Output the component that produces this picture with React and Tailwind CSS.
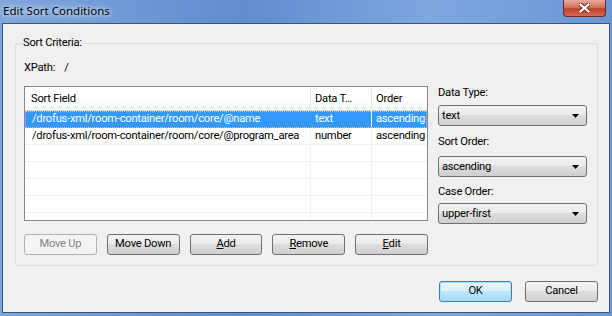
import React from 'react'

const font = { fontFamily: 'Roboto, "Noto Sans", sans-serif' }

function Btn({ children, disabled, primary, className = '' }) {
    let tone = 'border-[#707070] text-black bg-[linear-gradient(#f2f2f2_0%,#ebebeb_49%,#dddddd_50%,#cfcfcf_100%)]'
    if (disabled) tone = 'border-[#adb2b5] text-[#838383] bg-[#f4f4f4]'
    if (primary) tone = 'border-[#3c7fb1] text-black bg-[linear-gradient(#eaf6fd_0%,#d9f0fc_49%,#bee6fd_50%,#a7d9f5_100%)] shadow-[inset_0_0_0_1px_#a7e1fb]'
    return (
        <div className={`h-[21px] w-[73px] rounded-[3px] border flex items-center justify-center text-[11.2px] ${tone} ${className}`}>
            {children}
        </div>
    )
}

function Select({ value }) {
    return (
        <div className="h-[21px] w-[149px] rounded-[3px] border border-[#707070] bg-[linear-gradient(#f2f2f2_0%,#ebebeb_49%,#dddddd_50%,#cfcfcf_100%)] flex items-center justify-between pl-[3px] pr-[7px] text-[11.2px]">
            <span>{value}</span>
            <svg width="7" height="4" viewBox="0 0 7 4"><path d="M0 0h7L3.5 4z" fill="#000" /></svg>
        </div>
    )
}

export default function App() {
    const rows = [
        { field: '/drofus-xml/room-container/room/core/@name', type: 'text', order: 'ascending', selected: true },
        { field: '/drofus-xml/room-container/room/core/@program_area', type: 'number', order: 'ascending' },
        {}, {}, {}, {}, {}
    ]

    return (
        <div className="w-[612px] h-[316px] overflow-hidden flex flex-col tracking-[-0.25px] bg-[linear-gradient(90deg,#7ea5dc,#5f8dd0_40%,#7ea7de_70%,#6a97d6)]" style={font}>
            {/* Title bar */}
            <div className="h-[23px] flex items-start justify-between relative">
                <div className="pl-[3px] pt-[2px] text-[11.5px] tracking-normal text-black [text-shadow:0_0_8px_#e8f1fb,0_0_4px_#e8f1fb]" style={{ fontFamily: '"Noto Sans", sans-serif' }}>Edit Sort Conditions</div>
                <div className="mr-[6px] w-[43px] h-[17px] rounded-b-[4px] border border-t-0 border-[#6b2a24] bg-[linear-gradient(#e9a99b_0%,#d47563_45%,#c2412c_55%,#d16b4f_100%)] flex items-center justify-center">
                    <svg width="11" height="10" viewBox="0 0 11 10">
                        <path d="M1 1l9 8M10 1l-9 8" stroke="#5a1d14" strokeWidth="4" strokeLinecap="round" />
                        <path d="M1.5 1.5l8 7M9.5 1.5l-8 7" stroke="#fff" strokeWidth="2.2" strokeLinecap="square" />
                    </svg>
                </div>
            </div>

            {/* Client area */}
            <div className="ml-[2px] mr-[2px] h-[290px] border border-[#3a5577] bg-[#f0f0f0] flex flex-col pl-[12px] pr-[11px] pt-[19px]">
                {/* Group box */}
                <div className="relative h-[223px] border border-[#d5dfe5] rounded-[3px] flex pl-[8px] pt-[16px]">
                    <div className="absolute left-[6px] top-[-9px] px-[1px] bg-[#f0f0f0] text-[11.2px] leading-[16px]">Sort Criteria:</div>

                    <div className="flex flex-col w-[404px]">
                        <div className="h-[16px] flex items-center text-[11.2px] leading-[16px]">
                            <span>XPath:</span>
                            <span className="ml-[9px]">/</span>
                        </div>

                        <div className="mt-[10px] h-[135px] border border-[#828790] bg-white overflow-hidden text-[11.2px]">
                            <div className="flex h-[24px] pt-[2px] border-b border-[#d5d5d5] bg-[linear-gradient(#ffffff,#ffffff_50%,#f7f8fa)]">
                                <div className="w-[286px] border-r border-[#e3e6ea] pl-[6px] flex items-center">Sort Field</div>
                                <div className="w-[61px] border-r border-[#e3e6ea] pl-[4px] flex items-center">Data T…</div>
                                <div className="flex-1 pl-[4px] flex items-center">Order</div>
                            </div>
                            {rows.map((r, i) => (
                                <div key={i} className={`flex h-[17px] border-b ${r.selected ? 'bg-[#3399ff] text-white border-[#3399ff] outline-1 outline-dotted outline-offset-[-1px] outline-[#f0c060]' : 'border-[#f0f0f0]'}`}>
                                    <div className={`w-[286px] pl-[7px] flex items-center whitespace-nowrap overflow-hidden ${r.selected ? '' : 'border-r border-[#f0f0f0]'}`}>{r.field}</div>
                                    <div className="w-[61px] pl-[4px] flex items-center border-r border-[#f0f0f0]">{r.type}</div>
                                    <div className="flex-1 pl-[4px] flex items-center whitespace-nowrap overflow-hidden">{r.order}</div>
                                </div>
                            ))}
                        </div>

                        <div className="mt-[13px] flex gap-[10px]">
                            <Btn disabled>Move Up</Btn>
                            <Btn>Move Down</Btn>
                            <Btn><span><u>A</u>dd</span></Btn>
                            <Btn><span><u>R</u>emove</span></Btn>
                            <Btn><span><u>E</u>dit</span></Btn>
                        </div>
                    </div>

                    <div className="ml-[10px] pt-[25px] flex flex-col text-[11.2px] leading-[16px]">
                        <div>Data Type:</div>
                        <div className="mt-[4px]"><Select value="text" /></div>
                        <div className="mt-[8px]">Sort Order:</div>
                        <div className="mt-[6px]"><Select value="ascending" /></div>
                        <div className="mt-[7px]">Case Order:</div>
                        <div className="mt-[3px]"><Select value="upper-first" /></div>
                    </div>
                </div>

                {/* Dialog buttons */}
                <div className="mt-[15px] flex justify-end gap-[13px]">
                    <Btn primary className="w-[72px]">OK</Btn>
                    <Btn className="w-[73px]">Cancel</Btn>
                </div>
            </div>
        </div>
    )
}
